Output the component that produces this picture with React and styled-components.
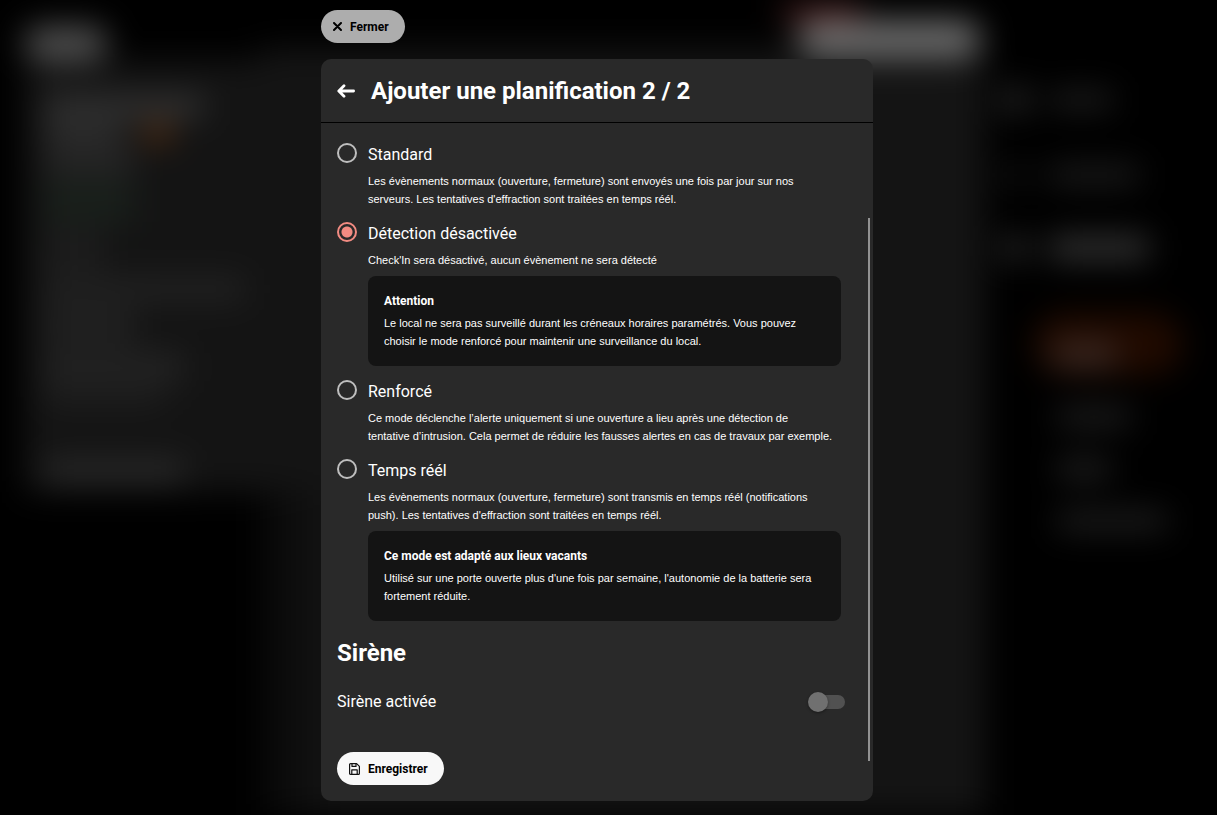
import { useState } from "react";
import styled, { createGlobalStyle, css } from "styled-components";

const MODES = [
  {
    id: "standard",
    label: "Standard",
    text: "Les évènements normaux (ouverture, fermeture) sont envoyés une fois par jour sur nos\nserveurs. Les tentatives d'effraction sont traitées en temps réél.",
  },
  {
    id: "disabled",
    label: "Détection désactivée",
    text: "Check'In sera désactivé, aucun évènement ne sera détecté",
    note: {
      title: "Attention",
      text: "Le local ne sera pas surveillé durant les créneaux horaires paramétrés. Vous pouvez\nchoisir le mode renforcé pour maintenir une surveillance du local.",
    },
  },
  {
    id: "reinforced",
    label: "Renforcé",
    text: "Ce mode déclenche l’alerte uniquement si une ouverture a lieu après une détection de\ntentative d’intrusion. Cela permet de réduire les fausses alertes en cas de travaux par exemple.",
  },
  {
    id: "realtime",
    label: "Temps réél",
    text: "Les évènements normaux (ouverture, fermeture) sont transmis en temps réél (notifications\npush). Les tentatives d'effraction sont traitées en temps réél.",
    note: {
      title: "Ce mode est adapté aux lieux vacants",
      text: "Utilisé sur une porte ouverte plus d'une fois par semaine, l'autonomie de la batterie sera\nfortement réduite.",
    },
  },
];

export default function App() {
  const [mode, setMode] = useState("disabled");
  const [siren, setSiren] = useState(false);

  return (
    <>
      <GlobalStyle />
      <Backdrop />
      <Page>
        <Dialog role="dialog" aria-labelledby="dialog-title">
          <PillButton type="button" $muted>
            <svg width="9" height="9" viewBox="0 0 9 9" aria-hidden="true">
              <path d="M1 1L8 8M8 1L1 8" stroke="#000" strokeWidth="2" strokeLinecap="round" />
            </svg>
            Fermer
          </PillButton>

          <Panel>
            <Header>
              <BackButton type="button" aria-label="Retour">
                <svg width="18" height="14" viewBox="0 0 18 14" fill="none" aria-hidden="true">
                  <path d="M7 1.8L1.8 7L7 12.2M2.4 7H16.6" stroke="#fff" strokeWidth="2.8" strokeLinecap="round" strokeLinejoin="round" />
                </svg>
              </BackButton>
              <Title id="dialog-title">Ajouter une planification 2 / 2</Title>
            </Header>

            <Body>
              <Modes>
                {MODES.map((item) => (
                  <Mode key={item.id}>
                    <Radio
                      type="radio"
                      name="mode"
                      id={item.id}
                      checked={mode === item.id}
                      onChange={() => setMode(item.id)}
                    />
                    <div>
                      <ModeLabel htmlFor={item.id}>{item.label}</ModeLabel>
                      <Text>{item.text}</Text>
                      {item.note && (
                        <Note>
                          <NoteTitle>{item.note.title}</NoteTitle>
                          <Text>{item.note.text}</Text>
                        </Note>
                      )}
                    </div>
                  </Mode>
                ))}
              </Modes>

              <SectionTitle>Sirène</SectionTitle>
              <SwitchRow>
                <label htmlFor="siren">Sirène activée</label>
                <Switch
                  type="checkbox"
                  id="siren"
                  checked={siren}
                  onChange={(e) => setSiren(e.target.checked)}
                />
              </SwitchRow>

              <PillButton type="button">
                <svg width="11" height="12" viewBox="0 0 11 12" fill="none" stroke="#111" strokeWidth="1.2" strokeLinejoin="round" aria-hidden="true">
                  <path d="M.6 1.6Q.6.6 1.6.6H7.6L10.4 3.4V10.4Q10.4 11.4 9.4 11.4H1.6Q.6 11.4.6 10.4Z" />
                  <path d="M3 .8V3.4H7V.8M2.8 11.2V6.8H8.2V11.2" />
                </svg>
                Enregistrer
              </PillButton>
            </Body>
            <ScrollThumb />
          </Panel>
        </Dialog>
      </Page>
    </>
  );
}

function Backdrop() {
  return (
    <BackdropRoot aria-hidden="true">
      <BackColumn>
        <Block $w={84} $h={34} $color="#505050" $round />
        <BackCard>
          <Block $w={160} $h={20} $color="#363636" />
          <BackRow>
            <Block $w={80} $h={18} $color="#343434" />
            <Block $w={28} $h={18} $color="#5c3010" />
          </BackRow>
          <Block $w={90} $h={24} $color="#282828" />
          <Block $w={90} $h={40} $color="#19201b" />
          <Block $w={60} $h={40} $color="#1d1d1d" />
          <Block $w={200} $h={22} $color="#232323" />
          <Block $w={90} $h={36} $color="#212121" />
          <Block $w={140} $h={30} $color="#232323" />
          <Block $w={120} $h={14} $color="#222222" />
          <Block $w={140} $h={24} $color="#292929" $space={48} />
        </BackCard>
      </BackColumn>
      <BackMain>
        <BackTop>
          <Block $w={80} $h={16} $color="#481c1c" />
          <Block $w={184} $h={38} $color="#6a6a6a" $round />
        </BackTop>
      </BackMain>
      <BackNav>
        <BackRow>
          <Block $w={28} $h={28} $color="#242424" />
          <Block $w={64} $h={18} $color="#202020" />
        </BackRow>
        <BackRow>
          <Block $w={28} $h={18} $color="#141414" />
          <Block $w={90} $h={18} $color="#202020" />
        </BackRow>
        <BackRow>
          <Block $w={28} $h={24} $color="#282828" />
          <Block $w={100} $h={24} $color="#343434" />
        </BackRow>
        <BackActive>
          <Block $w={64} $h={24} $color="#3c2a24" />
        </BackActive>
        <BackLinks>
          <Block $w={74} $h={18} $color="#222222" />
          <Block $w={54} $h={18} $color="#252525" />
          <Block $w={110} $h={18} $color="#222222" />
        </BackLinks>
      </BackNav>
    </BackdropRoot>
  );
}

const GlobalStyle = createGlobalStyle`
  * {
    box-sizing: border-box;
  }

  body {
    margin: 0;
    background: #000;
    color: #fff;
    font-family: Roboto, "Liberation Sans", sans-serif;
  }

  button,
  input {
    font-family: inherit;
    margin: 0;
  }
`;

const BackdropRoot = styled.div`
  position: fixed;
  inset: 0;
  display: flex;
  overflow: hidden;
  background: #000;
  filter: blur(16px);
`;

const BackColumn = styled.div`
  width: 260px;
  padding: 26px 0 0 24px;
`;

const BackCard = styled.div`
  display: flex;
  flex-direction: column;
  gap: 8px;
  height: 432px;
  padding: 36px 0 0 20px;
  background: #141414;
`;

const BackRow = styled.div`
  display: flex;
  align-items: center;
  gap: 20px;
`;

const BackMain = styled.div`
  flex: 1;
  background:
    linear-gradient(90deg, #070707, #141414 72px) 0 490px no-repeat,
    linear-gradient(#000 48px, #141414 48px);
`;

const BackTop = styled.div`
  display: flex;
  flex-direction: column;
  align-items: flex-end;
  padding: 4px 4px;

  > :first-child {
    margin-right: 120px;
  }
`;

const BackNav = styled.div`
  display: flex;
  flex-direction: column;
  gap: 52px;
  width: 232px;
  padding: 86px 0 0 16px;
`;

const BackActive = styled.div`
  width: 150px;
  margin-left: 32px;
  padding: 30px 20px 10px;
  border-radius: 32px;
  background: #200a00;
`;

const BackLinks = styled.div`
  display: flex;
  flex-direction: column;
  gap: 34px;
  margin-left: 56px;
  margin-top: -20px;
`;

const Block = styled.div`
  flex-shrink: 0;
  width: ${({ $w }) => $w}px;
  height: ${({ $h }) => $h}px;
  margin-top: ${({ $space }) => $space || 0}px;
  border-radius: ${({ $round }) => ($round ? 20 : 4)}px;
  background: ${({ $color }) => $color};
`;

const Page = styled.main`
  position: relative;
  display: flex;
  justify-content: center;
  min-height: 100vh;
  padding: 10px 23px 14px 0;
`;

const Dialog = styled.div`
  display: flex;
  flex-direction: column;
  align-items: flex-start;
  gap: 16px;
  width: 100%;
  max-width: 552px;
`;

const PillButton = styled.button`
  display: inline-flex;
  align-items: center;
  gap: 8px;
  height: 33px;
  padding: 0 16px 0 12px;
  border: 0;
  border-radius: 17px;
  background: ${({ $muted }) => ($muted ? "#adadad" : "#f8f8f8")};
  color: #000;
  font-size: 12px;
  font-weight: 700;
  line-height: 18px;
  cursor: pointer;
`;

const Panel = styled.section`
  position: relative;
  width: 100%;
  border-radius: 10px;
  background: #292929;
`;

const Header = styled.header`
  display: flex;
  align-items: center;
  gap: 16px;
  height: 64px;
  padding: 0 16px;
  border-bottom: 1px solid #000;
`;

const BackButton = styled.button`
  display: flex;
  padding: 0;
  border: 0;
  background: none;
  cursor: pointer;
`;

const heading = css`
  margin: 0;
  font-size: 24px;
  font-weight: 700;
  line-height: 32px;
`;

const Title = styled.h1`
  ${heading}
`;

const SectionTitle = styled.h2`
  ${heading}
`;

const Body = styled.div`
  padding: 20px 16px 16px;
`;

const Modes = styled.div`
  display: flex;
  flex-direction: column;
  gap: 14px;
  padding-right: 16px;
  margin-bottom: 16px;
`;

const Mode = styled.div`
  display: grid;
  grid-template-columns: 20px 1fr;
  column-gap: 11px;
`;

const Radio = styled.input`
  appearance: none;
  width: 20px;
  height: 20px;
  border: 2px solid ${({ checked }) => (checked ? "#f28b82" : "#bebebe")};
  border-radius: 50%;
  background: ${({ checked }) =>
    checked ? "radial-gradient(circle, #f28b82 5px, transparent 6px)" : "none"};
`;

const ModeLabel = styled.label`
  display: block;
  margin-bottom: 5px;
  font-size: 16px;
  line-height: 24px;
`;

const Text = styled.p`
  margin: 0;
  font-family: "Liberation Sans", Arial, sans-serif;
  font-size: 11px;
  line-height: 18px;
  white-space: pre-line;
`;

const Note = styled.div`
  margin-top: 7px;
  padding: 16px;
  border-radius: 8px;
  background: #141414;
`;

const NoteTitle = styled.div`
  margin-bottom: 4px;
  font-size: 12px;
  font-weight: 700;
  line-height: 18px;
`;

const SwitchRow = styled.div`
  display: flex;
  align-items: center;
  justify-content: space-between;
  margin: 21px 12px 38px 0;
  font-size: 16px;
  line-height: 24px;
`;

const Switch = styled.input`
  appearance: none;
  display: flex;
  align-items: center;
  width: 34px;
  height: 14px;
  border-radius: 7px;
  background: #515151;

  &::before {
    content: "";
    width: 20px;
    height: 20px;
    margin-left: ${({ checked }) => (checked ? 17 : -3)}px;
    border-radius: 50%;
    background: #707070;
    box-shadow: 0 1px 3px rgba(0, 0, 0, 0.4);
  }
`;

const ScrollThumb = styled.div`
  position: absolute;
  top: 159px;
  right: 3px;
  bottom: 40px;
  width: 2px;
  background: #929292;
`;
